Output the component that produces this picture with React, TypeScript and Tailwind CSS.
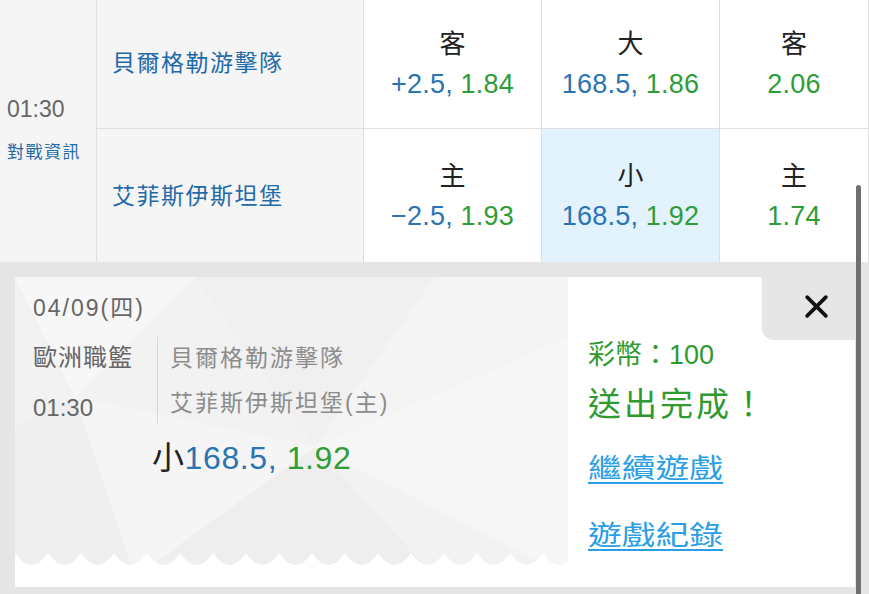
import React from "react";

const FONT = { fontFamily: '"Liberation Sans", "Noto Sans CJK TC", sans-serif' };

function OddsCell({ top, blue, green, hl, h }: { top: string; blue?: string; green: string; hl?: boolean; h: string }) {
  return (
    <div className={`flex flex-col items-center justify-center border-r border-[#dedede] ${hl ? "bg-[#e2f3fd]" : "bg-white"} ${h}`}>
      <div className="text-[26px] leading-[40px] text-[#222]">{top}</div>
      <div className="text-[27px] leading-[40px] tracking-[0.2px]">
        {blue && <span className="text-[#2a74b3]">{blue}, </span>}
        <span className="text-[#2f9d37]">{green}</span>
      </div>
    </div>
  );
}

function Zigzag() {
  const p = 33;
  let d = "M0,0";
  for (let x = 0; x < 560; x += p) {
    d += ` Q${x + p / 2},24 ${x + p},0`;
  }
  d += " L560,40 L0,40 Z";
  return (
    <svg width="553" height="34" viewBox="0 0 553 34" className="block">
      <path d={d} fill="#ffffff" />
    </svg>
  );
}

export default function App() {
  return (
    <div className="relative w-[869px] h-[594px] overflow-hidden bg-[#e5e5e5]" style={FONT}>
      {/* table */}
      <div className="flex h-[262px] bg-white">
        <div className="w-[97px] shrink-0 border-r border-[#dedede] bg-[#f5f5f6] flex flex-col justify-center pl-[7px]">
          <div className="text-[23px] leading-[44px] text-[#666]">01:30</div>
          <div className="text-[17px] leading-[44px] text-[#1f6aa8] tracking-[1.5px]">對戰資訊</div>
        </div>
        <div className="flex flex-col">
          <div className="flex h-[129px] border-b border-[#dedede]">
            <div className="w-[267px] border-r border-[#dedede] bg-[#f5f5f6] flex items-center pl-[15px] text-[23px] tracking-[1.5px] text-[#1f6aa8] pb-[2px]">貝爾格勒游擊隊</div>
            <div className="w-[178px]"><OddsCell h="h-full" top="客" blue="+2.5" green="1.84" /></div>
            <div className="w-[178px]"><OddsCell h="h-full" top="大" blue="168.5" green="1.86" /></div>
            <div className="w-[149px]"><OddsCell h="h-full" top="客" green="2.06" /></div>
          </div>
          <div className="flex h-[133px]">
            <div className="w-[267px] border-r border-[#dedede] bg-[#f5f5f6] flex items-center pl-[15px] text-[23px] tracking-[1.5px] text-[#1f6aa8] pt-[2px]">艾菲斯伊斯坦堡</div>
            <div className="w-[178px]"><OddsCell h="h-full" top="主" blue="−2.5" green="1.93" /></div>
            <div className="w-[178px]"><OddsCell h="h-full" top="小" blue="168.5" green="1.92" hl /></div>
            <div className="w-[149px]"><OddsCell h="h-full" top="主" green="1.74" /></div>
          </div>
        </div>
      </div>

      {/* bottom area */}
      <div className="pt-[15px] pl-[15px]">
        <div className="relative flex w-[840px] h-[310px]">
          {/* left ticket */}
          <div className="relative w-[553px] h-full bg-[#f2f2f2] flex flex-col overflow-hidden">
            <svg className="absolute inset-0" width="553" height="310" viewBox="0 0 553 310">
              <polygon points="0,0 180,0 60,120" fill="#f7f7f7" />
              <polygon points="180,0 420,0 300,170" fill="#f0f0f0" />
              <polygon points="60,120 300,170 120,300" fill="#f5f5f5" />
              <polygon points="300,170 553,60 553,300" fill="#f6f6f6" />
              <polygon points="420,0 553,0 553,60 300,170" fill="#f4f4f4" />
              <polygon points="0,150 60,120 120,300 0,300" fill="#efefef" />
              <polygon points="120,300 300,170 420,300" fill="#eeeeee" />
            </svg>
            <div className="relative flex-1 pl-[18px] pt-[11px] text-[#666]">
              <div className="text-[23px] leading-[40px] tracking-[2px]">04/09(四)</div>
              <div className="flex mt-[5px]">
                <div className="w-[124px]">
                  <div className="text-[24px] leading-[50px] tracking-[1px]">歐洲職籃</div>
                  <div className="text-[24px] leading-[50px]">01:30</div>
                </div>
                <div className="w-px h-[86px] bg-[#d6d6d6] mt-[4px]" />
                <div className="pl-[12px] pt-[3px] text-[#8c8c8c] text-[23px] tracking-[2px]">
                  <div className="leading-[45px]">貝爾格勒游擊隊</div>
                  <div className="leading-[45px]">艾菲斯伊斯坦堡(主)</div>
                </div>
              </div>
              <div className="ml-[119px] mt-[5px] text-[32px] leading-[40px] tracking-[0.6px]">
                <span className="text-[#222]">小</span>
                <span className="text-[#2a74b3]">168.5, </span>
                <span className="text-[#2f9d37]">1.92</span>
              </div>
            </div>
            <div className="relative">
              <Zigzag />
            </div>
          </div>

          {/* right panel */}
          <div className="flex-1 bg-white pl-[20px] pt-[57px]">
            <div className="text-[27px] leading-[42px] text-[#2f9a2f]">彩幣：100</div>
            <div className="text-[33px] leading-[58px] tracking-[3px] text-[#2f9a2f]">送出完成！</div>
            <div className="mt-[9px] h-[52px] flex items-center">
              <span className="inline-block origin-left scale-x-[1.25] text-[27px] leading-[40px] text-[#2b9fe6] underline underline-offset-[4px] decoration-[2px]">繼續遊戲</span>
            </div>
            <div className="mt-[15px] h-[52px] flex items-center">
              <span className="inline-block origin-left scale-x-[1.25] text-[27px] leading-[40px] text-[#2b9fe6] underline underline-offset-[4px] decoration-[2px]">遊戲紀錄</span>
            </div>
          </div>

          {/* close */}
          <div className="absolute right-0 top-0 w-[93px] h-[63px] bg-[#e6e6e6] rounded-bl-[12px] flex items-center justify-center pl-[16px] pb-[4px]">
            <svg width="25" height="25" viewBox="0 0 24 24">
              <path d="M3 3 L21 21 M21 3 L3 21" stroke="#111" strokeWidth="3.5" strokeLinecap="round" />
            </svg>
          </div>
        </div>
      </div>

      {/* scrollbar */}
      <div className="absolute left-[856px] top-[185px] w-[5px] h-[420px] bg-[#6f6f6f] rounded-full" />
    </div>
  );
}
